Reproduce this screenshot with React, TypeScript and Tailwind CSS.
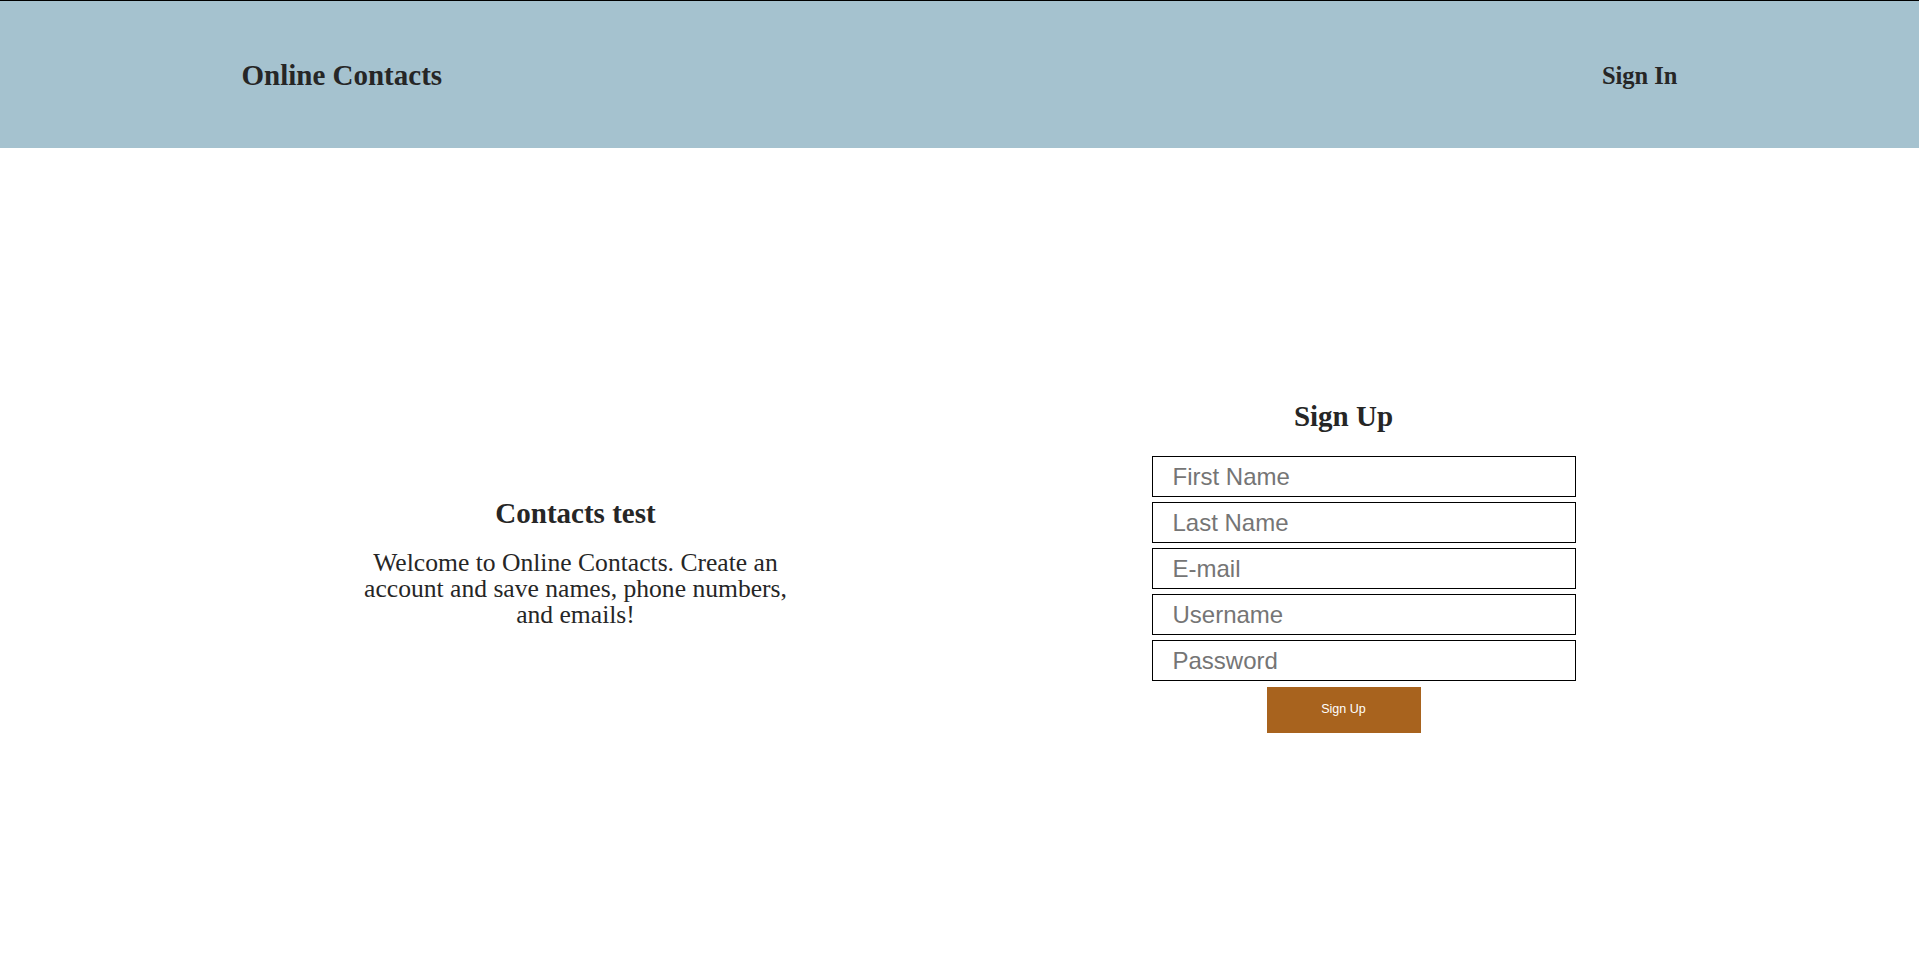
import { useState } from 'react';

const serif = { fontFamily: '"Liberation Serif", "Times New Roman", serif' };
const sans = { fontFamily: '"Liberation Sans", Arial, sans-serif' };

const fields = [
  { name: 'firstName', placeholder: 'First Name', type: 'text' },
  { name: 'lastName', placeholder: 'Last Name', type: 'text' },
  { name: 'email', placeholder: 'E-mail', type: 'email' },
  { name: 'username', placeholder: 'Username', type: 'text' },
  { name: 'password', placeholder: 'Password', type: 'password' },
];

export default function App() {
  const [form, setForm] = useState<Record<string, string>>({});

  return (
    <div className="min-h-screen bg-white text-[#262626]" style={serif}>
      <header className="h-[148px] bg-[#a5c2cf] border-t border-black">
        <div className="max-w-[1536px] mx-auto h-full px-[50px] pt-[2px] flex items-center justify-between">
          <h1 className="text-[29px] font-bold leading-none">Online Contacts</h1>
          <a href="#" className="text-[24.5px] font-bold leading-none pt-[2px]">Sign In</a>
        </div>
      </header>

      <main className="max-w-[1536px] mx-auto h-[calc(100vh-148px)] grid grid-cols-2 items-center">
        <section className="flex flex-col items-center text-center">
          <h2 className="text-[29px] font-bold leading-none mb-[22px]">Contacts test</h2>
          <p className="w-[440px] text-[25.6px] leading-[26px]">
            Welcome to Online Contacts. Create an account and save names, phone numbers, and emails!
          </p>
        </section>

        <section className="flex flex-col items-center pt-[7px]">
          <h2 className="text-[29px] font-bold leading-none mb-[25px]">Sign Up</h2>
          <form className="w-[384px] flex flex-col gap-[5px]" onSubmit={e => e.preventDefault()}>
            {fields.map(f => (
              <input
                key={f.name}
                type={f.type}
                placeholder={f.placeholder}
                value={form[f.name] || ''}
                onChange={e => setForm({ ...form, [f.name]: e.target.value })}
                className="w-[424px] max-w-none h-[41px] border border-black px-[20px] pt-[2px] text-[24px] text-[#222] placeholder:text-[#757575] outline-none"
                style={sans}
              />
            ))}
            <button
              type="submit"
              className="self-center mt-[1px] w-[154px] h-[46px] bg-[#a8631e] text-white text-[12.5px]"
              style={sans}
            >
              Sign Up
            </button>
          </form>
        </section>
      </main>
    </div>
  );
}
